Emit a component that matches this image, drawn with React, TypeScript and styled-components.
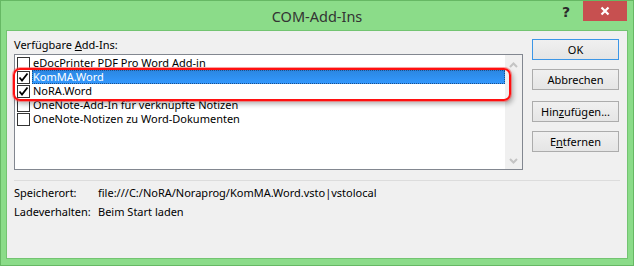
import React from "react";
import styled, { createGlobalStyle } from "styled-components";

const Global = createGlobalStyle`
  html, body { margin: 0; padding: 0; background: #8bdc89; }
  body { width: 634px; height: 266px; overflow: hidden; }
  * { box-sizing: border-box; }
`;

const FONT = `"Noto Sans", "Open Sans", sans-serif`;

const Window = styled.div`
  width: 634px;
  height: 266px;
  background: #8bdc89;
  border: 1px solid #66b864;
  display: flex;
  flex-direction: column;
  font-family: ${FONT};
  font-size: 11px;
  color: #000;
`;

const TitleBar = styled.div`
  height: 30px;
  display: grid;
  grid-template-columns: 1fr auto 1fr;
  align-items: start;
`;

const Title = styled.div`
  grid-column: 2;
  font-size: 14.5px;
  line-height: 30px;
  color: #333;
`;

const Caption = styled.div`
  grid-column: 3;
  justify-self: end;
  display: flex;
  align-items: flex-start;
  margin-right: 6px;
`;

const HelpBtn = styled.div`
  width: 18px;
  height: 22px;
  margin-right: 8px;
  font-family: "DejaVu Sans", sans-serif;
  font-weight: bold;
  font-size: 14px;
  line-height: 22px;
  text-align: center;
  color: #2a2a2a;
`;

const CloseBtn = styled.div`
  width: 44px;
  height: 20px;
  background: #c75050;
  display: flex;
  align-items: center;
  justify-content: center;
`;

const Client = styled.div`
  flex: 1;
  margin: 0 6px 7px 6px;
  background: #f0f0f0;
  box-shadow: 0 0 0 1px #73c471;
  padding: 6px 7px 0 7px;
  display: flex;
  flex-direction: column;
`;

const TopArea = styled.div`
  display: flex;
  align-items: flex-start;
`;

const LeftCol = styled.div`
  width: 509px;
  display: flex;
  flex-direction: column;
`;

const Label = styled.div`
  line-height: 16px;
  height: 16px;
  margin-bottom: 1px;
`;

const ListWrap = styled.div`
  position: relative;
`;

const ListBox = styled.div`
  height: 116px;
  border: 1px solid #828790;
  background: #fff;
  display: flex;
`;

const Items = styled.div`
  flex: 1;
  padding-top: 1px;
  display: flex;
  flex-direction: column;
`;

const Row = styled.div`
  height: 14px;
  display: flex;
  align-items: center;
  padding-left: 2px;
`;

const Box = styled.div`
  width: 13px;
  height: 13px;
  border: 1px solid #333;
  background: #fff;
  flex: none;
  display: flex;
  align-items: center;
  justify-content: center;
`;

const ItemText = styled.div<{ $selected?: boolean }>`
  margin-left: 2px;
  flex: 1;
  height: 14px;
  line-height: 14px;
  padding-left: 1px;
  white-space: nowrap;
  overflow: hidden;
  color: ${(p) => (p.$selected ? "#fff" : "#000")};
  background: ${(p) =>
    p.$selected ? "linear-gradient(#2b86e0, #3399ff)" : "transparent"};
  outline: ${(p) => (p.$selected ? "1px dotted #1c4f8a" : "none")};
  outline-offset: -1px;
`;

const ScrollBar = styled.div`
  width: 17px;
  background: #f0f0f0;
  display: flex;
  flex-direction: column;
  justify-content: space-between;
  align-items: center;
  padding: 7px 0 5px;
`;

const Highlight = styled.div`
  position: absolute;
  left: -1px;
  top: 14px;
  width: 498px;
  height: 33px;
  border: 2px solid #ff1010;
  border-radius: 7px;
  box-shadow: 0 0 0 1px rgba(255, 90, 90, 0.55), 2px 3px 5px rgba(0, 0, 0, 0.3);
  pointer-events: none;
`;

const RightCol = styled.div`
  width: 87px;
  margin-left: 9px;
  margin-top: 2px;
  display: flex;
  flex-direction: column;
`;

const Button = styled.div<{ $default?: boolean; $gap?: number }>`
  height: 21px;
  margin-top: ${(p) => p.$gap ?? 0}px;
  border: 1px solid ${(p) => (p.$default ? "#3c96e6" : "#acacac")};
  background: linear-gradient(#f0f0f0, #e5e5e5);
  text-align: center;
  line-height: 19px;
`;

const U = styled.span`
  text-decoration: underline;
`;

const Separator = styled.div`
  height: 1px;
  background: #dcdcdc;
  margin-top: 10px;
`;

const Info = styled.div`
  display: grid;
  grid-template-columns: 84px 1fr;
  row-gap: 3px;
  margin-top: 4px;
  line-height: 16px;
`;

const Check = () => (
  <svg width="11" height="11" viewBox="0 0 11 11">
    <polyline points="1.5,5.5 4,8.5 9.5,1.5" fill="none" stroke="#000" strokeWidth="1.8" />
  </svg>
);

const Chevron = ({ up }: { up?: boolean }) => (
  <svg width="9" height="6" viewBox="0 0 9 6">
    <polyline
      points={up ? "1,5 4.5,1.5 8,5" : "1,1 4.5,4.5 8,1"}
      fill="none"
      stroke="#c4c4c4"
      strokeWidth="2"
    />
  </svg>
);

const items = [
  { name: "eDocPrinter PDF Pro Word Add-in", checked: false },
  { name: "KomMA.Word", checked: true, selected: true },
  { name: "NoRA.Word", checked: true },
  { name: "OneNote-Add-In für verknüpfte Notizen", checked: false },
  { name: "OneNote-Notizen zu Word-Dokumenten", checked: false },
];

export default function App() {
  return (
    <>
      <Global />
      <Window>
        <TitleBar>
          <Title>COM-Add-Ins</Title>
          <Caption>
            <HelpBtn>?</HelpBtn>
            <CloseBtn>
              <svg width="10" height="10" viewBox="0 0 10 10">
                <path d="M1.5 1.5 L8.5 8.5 M8.5 1.5 L1.5 8.5" stroke="#fff" strokeWidth="2.2" />
              </svg>
            </CloseBtn>
          </Caption>
        </TitleBar>
        <Client>
          <TopArea>
            <LeftCol>
              <Label>
                Verfügbare <U>A</U>dd-Ins:
              </Label>
              <ListWrap>
                <ListBox>
                  <Items>
                    {items.map((it) => (
                      <Row key={it.name}>
                        <Box>{it.checked && <Check />}</Box>
                        <ItemText $selected={it.selected}>{it.name}</ItemText>
                      </Row>
                    ))}
                  </Items>
                  <ScrollBar>
                    <Chevron up />
                    <Chevron />
                  </ScrollBar>
                </ListBox>
                <Highlight />
              </ListWrap>
            </LeftCol>
            <RightCol>
              <Button $default>OK</Button>
              <Button $gap={9}>Abbrechen</Button>
              <Button $gap={11}>
                Hin<U>z</U>ufügen...
              </Button>
              <Button $gap={9}>
                E<U>n</U>tfernen
              </Button>
            </RightCol>
          </TopArea>
          <Separator />
          <Info>
            <div>Speicherort:</div>
            <div>file:///C:/NoRA/Noraprog/KomMA.Word.vsto|vstolocal</div>
            <div>Ladeverhalten:</div>
            <div>Beim Start laden</div>
          </Info>
        </Client>
      </Window>
    </>
  );
}
